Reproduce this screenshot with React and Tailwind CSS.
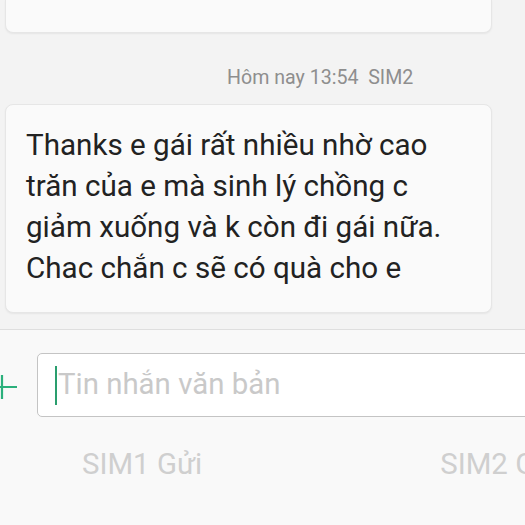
export default function App() {
  return (
    <div
      className="w-[525px] h-[525px] overflow-hidden flex flex-col bg-[#f9f9f9]"
      style={{ fontFamily: 'Roboto, "Noto Sans", sans-serif' }}
    >
      {/* Conversation */}
      <div className="h-[330px] shrink-0 flex flex-col bg-[#f3f3f3] border-b border-[#dedede]">
        <div className="ml-[5px] w-[487px] h-[33px] shrink-0 rounded-b-[8px] bg-[#fafafa] border border-t-0 border-[#e6e6e6] shadow-[0_1px_2px_rgba(0,0,0,0.06)]" />

        <div className="pl-[227px] mt-[33px] h-[24px] flex items-center text-[19.6px] leading-none text-[#8e8e8e] whitespace-pre">
          Hôm nay 13:54  SIM2
        </div>

        <div className="ml-[5px] mt-[14px] w-[487px] h-[209px] shrink-0 rounded-[8px] bg-[#fafafa] border border-[#e6e6e6] shadow-[0_1px_2px_rgba(0,0,0,0.06)] pl-[20px] pt-[20px] text-[29.6px] leading-[41px] text-[#222] whitespace-nowrap">
          <div>Thanks e gái rất nhiều nhờ cao</div>
          <div>trăn của e mà sinh lý chồng c</div>
          <div>giảm xuống và k còn đi gái nữa.</div>
          <div>Chac chắn c sẽ có quà cho e</div>
        </div>
      </div>

      {/* Composer */}
      <div className="flex items-center mt-[23px] h-[64px]">
        <div className="w-[37px] h-full flex items-center shrink-0 overflow-hidden relative">
          <svg width="30" height="30" viewBox="0 0 30 30" className="-ml-[12px] mt-[3px]">
            <path d="M14 3v24M2 15h27" stroke="#2bb07c" strokeWidth="2.2" fill="none" />
          </svg>
        </div>
        <div className="flex-1 h-full -mr-[20px] rounded-[5px] border border-[#c4c4c4] bg-white flex items-center pl-[17px]">
          <div className="w-[2px] h-[39px] bg-[#2a9e6e]" />
          <span className="ml-[1px] text-[29.4px] text-[#c9c9c9] leading-none whitespace-nowrap">Tin nhắn văn bản</span>
        </div>
      </div>

      <div className="flex mt-[33px] h-[30px] items-center text-[29.4px] leading-none text-[#cfcfcf] whitespace-nowrap">
        <span className="ml-[82px]">SIM1 Gửi</span>
        <span className="ml-[238px]">SIM2 Gửi</span>
      </div>
    </div>
  )
}
